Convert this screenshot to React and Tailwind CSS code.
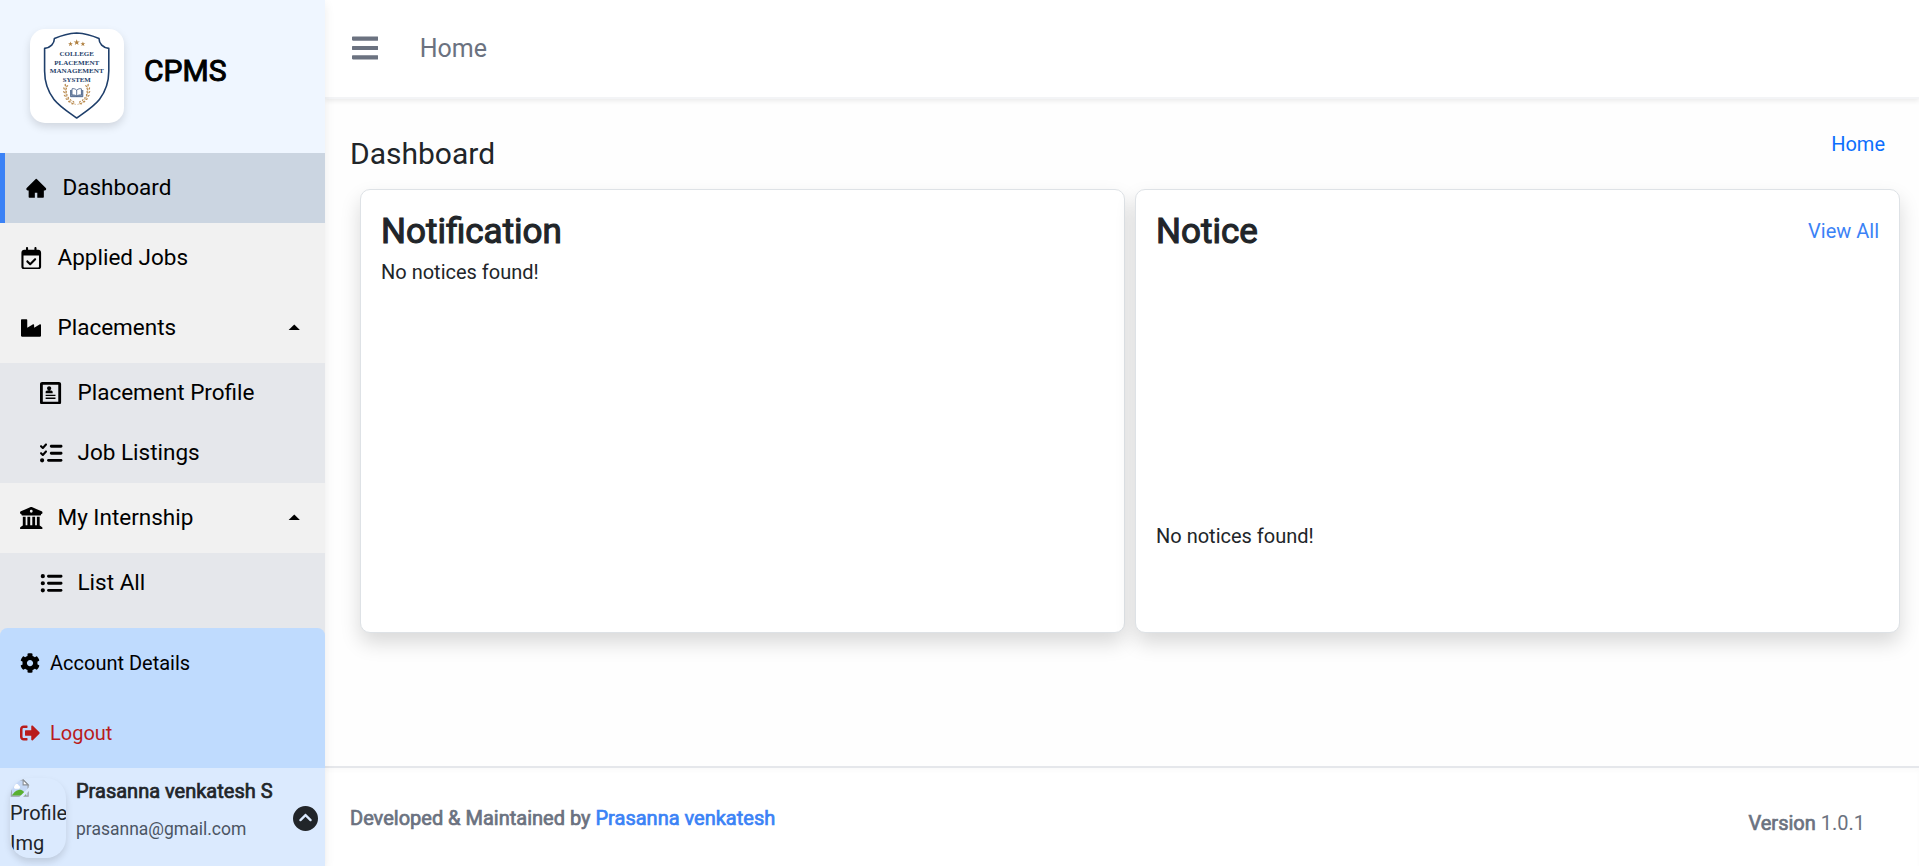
import React from "react";
import { FaBars, FaIndustry, FaSignOutAlt, FaCog } from "react-icons/fa";
import { FaBuildingColumns, FaListCheck, FaListUl, FaCircleChevronUp, FaRegCalendarCheck } from "react-icons/fa6";
import { AiFillHome } from "react-icons/ai";
import { ImProfile } from "react-icons/im";
import { IoMdArrowDropup } from "react-icons/io";

const STAR = "M0-3.2L.8-1 3.1-1 1.2.4 1.9 2.7 0 1.3-1.9 2.7-1.2.4-3.1-1-.8-1Z";

const LEAVES = [
  [36.2, 56, -20], [34.9, 59.2, -5], [34.8, 62.6, 10], [35.4, 66, 25],
  [37, 69.2, 40], [39.4, 71.8, 55], [42.4, 73.8, 70],
];

function CollegeLogo() {
  return (
    <svg viewBox="0 0 94 94" className="size-full">
      <path
        d="M46.7 4C39 4.400 31 6.600 24.400 9.600C24.400 14.600 20.500 18.800 14.600 19.400V42C14.600 52 17.500 62 24 70.500C30 78 38.500 83.200 46.700 89C54.900 83.200 63.400 78 69.400 70.500C75.900 62 78.800 52 78.800 42V19.400C72.900 18.800 69 14.600 69 9.600C62.400 6.600 54.400 4.400 46.700 4Z"
        fill="none"
        stroke="#1f3f6b"
        strokeWidth="1.6"
        strokeLinejoin="round"
      />
      <g fill="#b08040">
        <path d={STAR} transform="translate(46.700 13.400)" />
        <path d={STAR} transform="translate(40.500 15) scale(.8)" />
        <path d={STAR} transform="translate(52.900 15) scale(.8)" />
      </g>
      <g
        fill="#1f3f6b"
        fontFamily="'Liberation Serif', serif"
        fontWeight="bold"
        fontSize="6.8"
        textAnchor="middle"
      >
        <text x="46.700" y="26.700" textLength="34.500" lengthAdjust="spacingAndGlyphs">COLLEGE</text>
        <text x="46.700" y="35.700" textLength="45" lengthAdjust="spacingAndGlyphs">PLACEMENT</text>
        <text x="46.700" y="44.400" textLength="54" lengthAdjust="spacingAndGlyphs">MANAGEMENT</text>
        <text x="46.700" y="53" textLength="28" lengthAdjust="spacingAndGlyphs">SYSTEM</text>
      </g>
      {[1, -1].map((side) => (
        <g key={side} transform={side === 1 ? undefined : "translate(93.400 0) scale(-1 1)"} fill="#b98a4e">
          <path d="M36.500 56.500C33.500 66 38.500 74 46 75.500" fill="none" stroke="#b98a4e" strokeWidth=".5" />
          {LEAVES.map(([x, y, r]) => (
            <g key={y} transform={`translate(${x} ${y}) rotate(${-r})`}>
              <ellipse cx="-.9" cy="0" rx=".7" ry="1.300" transform="rotate(-25)" />
              <ellipse cx="1.500" cy="0" rx=".6" ry="1.200" transform="rotate(25)" />
            </g>
          ))}
        </g>
      ))}
      <g fill="#fff" stroke="#3a5680" strokeWidth=".8" strokeLinejoin="round">
        <path d="M40.600 61V67.700H52.800V61" fill="#8b9bb3" />
        <path d="M46.700 61.200C45.200 59.700 43.400 59.400 42 59.800V66C43.600 65.700 45.400 66 46.700 67.200C48 66 49.800 65.700 51.400 66V59.800C50 59.400 48.200 59.700 46.700 61.200ZV67.200" />
      </g>
    </svg>
  );
}

function BrokenImage() {
  return (
    <svg viewBox="0 0 16 16" className="block size-5">
      <path d="M1 1.500H10.500L14.500 5.500V14.500H1Z" fill="#c5d8f6" />
      <path d="M1 1.500H10.500L14.500 5.500V14.500H1Z" fill="none" stroke="#9aa0a6" strokeWidth="1" />
      <path d="M3.500 6.500a1.800 1.800 0 0 1 3.500-.6 1.500 1.500 0 0 1 .3 2.700H4a1.300 1.300 0 0 1-.5-2.100Z" fill="#fff" />
      <path d="M1.500 14C3 11 6 9.300 8 9.300C10 9.300 12 11.500 13 14Z" fill="#58b030" />
      <path d="M16 6.500L7 15.500H10L16 9.500Z" fill="#dbeafe" />
      <path d="M10.500 1.500V5.500H14.500Z" fill="#fff" stroke="#8a8f96" strokeWidth=".9" />
    </svg>
  );
}

function NavItem({ icon, label, open }) {
  return (
    <li className="flex h-[70px] items-center px-5 text-[22.5px] text-black">
      <span className="flex w-[22.500px] justify-center">{icon}</span>
      <span className="ml-[15px] flex-1">{label}</span>
      {open && <IoMdArrowDropup className="-mt-px size-[22.500px]" />}
    </li>
  );
}

function SubItem({ icon, label }) {
  return (
    <li className="flex h-[60px] items-center pl-10 text-[22.5px] text-black">
      <span className="flex w-[22.500px] justify-center">{icon}</span>
      <span className="ml-[15px]">{label}</span>
    </li>
  );
}

function Sidebar() {
  return (
    <aside className="relative z-10 flex h-full w-[325px] shrink-0 flex-col bg-[#f1f1f1] shadow-[0_4px_10px_rgba(0,0,0,0.08)]">
      <div className="flex h-[153px] shrink-0 items-center bg-[#eff6ff] pl-[30px]">
        <div className="-mt-px size-[94px] overflow-hidden rounded-[15px] bg-white shadow-[0_4px_8px_rgba(0,0,0,0.13)]">
          <CollegeLogo />
        </div>
        <h1 className="-mt-3 ml-5 text-[30px] leading-10 text-black [-webkit-text-stroke:1px]">CPMS</h1>
      </div>
      <nav className="min-h-0 flex-1 overflow-hidden">
        <div className="flex h-[70px] items-center border-l-[5px] border-[#3b82f6] bg-[#cbd5e1] pl-5 text-[22.5px] text-black">
          <AiFillHome className="size-[22.500px]" />
          <span className="ml-[15px]">Dashboard</span>
        </div>
        <ul>
          <NavItem icon={<FaRegCalendarCheck className="size-[22.500px]" />} label="Applied Jobs" />
          <NavItem icon={<FaIndustry className="size-5" />} label="Placements" open />
        </ul>
        <ul className="bg-[#e5e7eb]">
          <SubItem icon={<ImProfile className="size-[22.500px]" />} label="Placement Profile" />
          <SubItem icon={<FaListCheck className="size-[22.500px]" />} label="Job Listings" />
        </ul>
        <ul>
          <NavItem icon={<FaBuildingColumns className="size-[22.500px]" />} label="My Internship" open />
        </ul>
        <ul className="h-[90px] bg-[#e5e7eb]">
          <SubItem icon={<FaListUl className="size-[22.500px]" />} label="List All" />
        </ul>
      </nav>
      <div className="shrink-0 bg-[#e5e7eb]">
        <ul className="rounded-t-[7.500px] bg-[#bfdbfe] text-xl">
          <li className="flex h-[70px] items-center pl-5 text-black">
            <FaCog className="size-5" />
            <span className="ml-2.5">Account Details</span>
          </li>
          <li className="flex h-[70px] items-center pl-5 text-[#b91c1c]">
            <FaSignOutAlt className="size-5" />
            <span className="ml-2.5">Logout</span>
          </li>
        </ul>
      </div>
      <div className="flex h-[98px] shrink-0 items-start bg-[#dbeafe] pl-2.5 pt-2.5 text-[#212529]">
        <div className="h-20 w-14 overflow-hidden rounded-[20px] text-xl leading-[30px] shadow-[0_4px_7px_rgba(0,0,0,0.13)]">
          <BrokenImage />
          <div>Profile</div>
          <div>Img</div>
        </div>
        <div className="ml-2.5 w-[216.500px]">
          <div className="-mt-1 text-xl leading-[34px] [-webkit-text-stroke:0.700px]">Prasanna venkatesh S</div>
          <div className="mt-1 text-[17.500px] leading-[34px] text-[#4b5563]">prasanna@gmail.com</div>
        </div>
        <FaCircleChevronUp className="mt-[27.500px] size-[25px]" />
      </div>
    </aside>
  );
}

function Card({ children }) {
  return (
    <section className="h-[444px] flex-1 rounded-[10px] border border-[#dee2e6] bg-white px-5 pt-[21px] shadow-[0_10px_20px_rgba(0,0,0,0.15)]">
      {children}
    </section>
  );
}

export default function App() {
  return (
    <div className="flex h-[866px] w-full overflow-hidden bg-[#fefefe] font-['Roboto',sans-serif] text-[#212529]">
      <Sidebar />
      <div className="flex min-w-0 flex-1 flex-col">
        <header className="flex h-[99px] shrink-0 items-center border-b-2 border-[#f3f4f6] bg-white pl-[27px] text-[#6b7280] shadow-[0_2px_5px_rgba(0,0,0,0.08)]">
          <FaBars className="-mt-px h-[30px] w-[26.250px]" />
          <span className="ml-[41.500px] text-[25px]">Home</span>
        </header>
        <main className="flex-1">
          <div className="flex h-[90px] justify-between pl-[25px] pr-[34px]">
            <h2 className="pt-[32px] text-[30px] leading-[45px]">Dashboard</h2>
            <a className="pt-[30px] text-xl leading-[30px] text-[#0d6efd]">Home</a>
          </div>
          <div className="flex gap-2.5 pl-[35px] pr-[19px]">
            <Card>
              <h3 className="text-[35px] leading-[42px] [-webkit-text-stroke:1.100px]">Notification</h3>
              <p className="-mt-0.5 text-xl leading-[42px]">No notices found!</p>
            </Card>
            <Card>
              <div className="flex items-center justify-between">
                <h3 className="text-[35px] leading-[42px] [-webkit-text-stroke:1.100px]">Notice</h3>
                <a className="-mt-0.5 text-xl text-[#3b82f6]">View All</a>
              </div>
              <p className="mt-[268px] text-xl leading-[30px]">No notices found!</p>
            </Card>
          </div>
        </main>
        <footer className="flex h-[100px] shrink-0 items-start justify-between border-t-2 border-[#e5e7eb] bg-white pl-[25px] pr-[54px] text-xl leading-[30px] text-[#6b7280] shadow-[inset_0_3px_4px_rgba(0,0,0,0.02)]">
          <p className="mt-[35px] [-webkit-text-stroke:0.700px]">
            Developed &amp; Maintained by <a className="text-[#3b82f6]">Prasanna venkatesh</a>
          </p>
          <p className="mt-10">
            <span className="[-webkit-text-stroke:0.700px]">Version</span> 1.0.1
          </p>
        </footer>
      </div>
    </div>
  );
}
